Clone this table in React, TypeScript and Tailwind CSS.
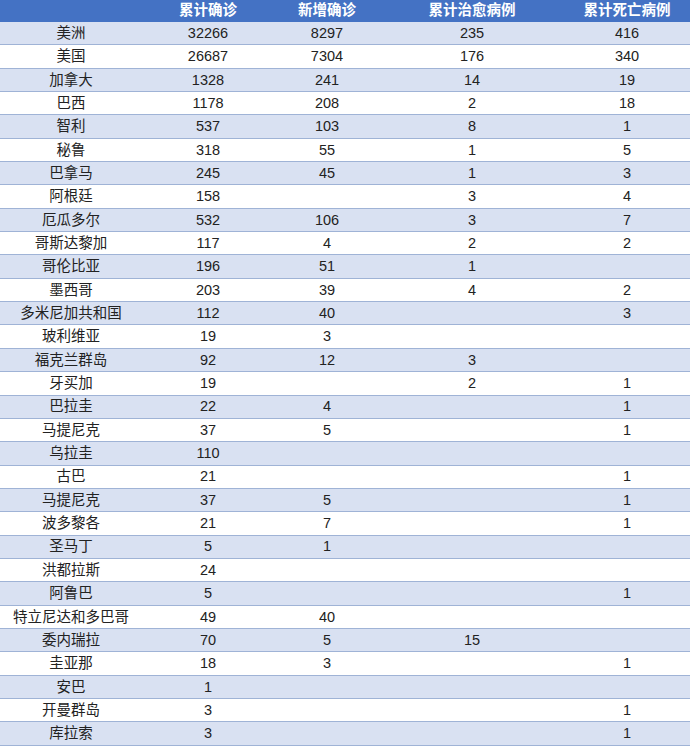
import React from 'react';

type Row = [string, string, string, string, string];

// 美洲疫情数据
const rows: Row[] = [
  ['美洲', '32266', '8297', '235', '416'],
  ['美国', '26687', '7304', '176', '340'],
  ['加拿大', '1328', '241', '14', '19'],
  ['巴西', '1178', '208', '2', '18'],
  ['智利', '537', '103', '8', '1'],
  ['秘鲁', '318', '55', '1', '5'],
  ['巴拿马', '245', '45', '1', '3'],
  ['阿根廷', '158', '', '3', '4'],
  ['厄瓜多尔', '532', '106', '3', '7'],
  ['哥斯达黎加', '117', '4', '2', '2'],
  ['哥伦比亚', '196', '51', '1', ''],
  ['墨西哥', '203', '39', '4', '2'],
  ['多米尼加共和国', '112', '40', '', '3'],
  ['玻利维亚', '19', '3', '', ''],
  ['福克兰群岛', '92', '12', '3', ''],
  ['牙买加', '19', '', '2', '1'],
  ['巴拉圭', '22', '4', '', '1'],
  ['马提尼克', '37', '5', '', '1'],
  ['乌拉圭', '110', '', '', ''],
  ['古巴', '21', '', '', '1'],
  ['马提尼克', '37', '5', '', '1'],
  ['波多黎各', '21', '7', '', '1'],
  ['圣马丁', '5', '1', '', ''],
  ['洪都拉斯', '24', '', '', ''],
  ['阿鲁巴', '5', '', '', '1'],
  ['特立尼达和多巴哥', '49', '40', '', ''],
  ['委内瑞拉', '70', '5', '15', ''],
  ['圭亚那', '18', '3', '', '1'],
  ['安巴', '1', '', '', ''],
  ['开曼群岛', '3', '', '', '1'],
  ['库拉索', '3', '', '', '1'],
];

const headers = ['', '累计确诊', '新增确诊', '累计治愈病例', '累计死亡病例'];
const widths = ['w-[142px]', 'w-[132px]', 'w-[106px]', 'w-[184px]', 'w-[126px]'];

export default function App() {
  return (
    <div className="w-[692px] h-[749px] bg-white font-['Liberation_Sans','Noto_Sans_CJK_SC',sans-serif] text-[14.5px] text-[#222]">
      <div className="w-[690px] flex flex-col">
        <div className="flex h-[22px] bg-[#4472c4] text-white font-bold text-[14.5px]">
          {headers.map((h, i) => (
            <div key={i} className={`${widths[i]} flex items-center justify-center`}>
              {h}
            </div>
          ))}
        </div>
        {rows.map((row, r) => (
          <div
            key={r}
            className={`flex h-[23.35px] border-b border-[#9fb3d6] ${r % 2 === 0 ? 'bg-[#d9e1f2]' : 'bg-white'}`}
          >
            {row.map((cell, i) => (
              <div key={i} className={`${widths[i]} flex items-center justify-center leading-none`}>
                {cell}
              </div>
            ))}
          </div>
        ))}
      </div>
    </div>
  );
}
